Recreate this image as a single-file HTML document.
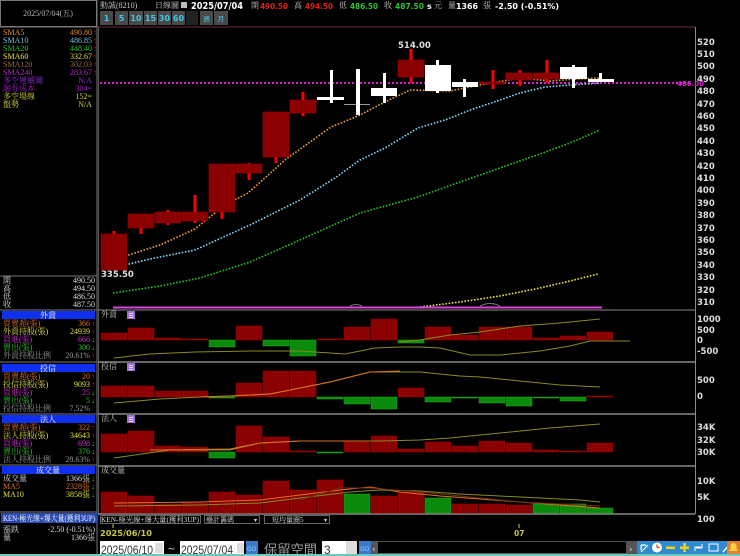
<!DOCTYPE html>
<html><head><meta charset="utf-8"><style>
html,body{margin:0;padding:0;background:#000;width:740px;height:556px;overflow:hidden}
svg{display:block}
.s{font-family:"Liberation Serif","Noto Serif CJK TC",serif;font-size:8px}
.b{font-family:"DejaVu Sans","Liberation Sans",sans-serif;font-weight:bold}
.ax{font-family:"DejaVu Sans","Liberation Sans",sans-serif;font-weight:bold;font-size:8.5px;fill:#ddd}
</style></head><body>
<svg width="740" height="556" viewBox="0 0 740 556" xmlns="http://www.w3.org/2000/svg">
<rect width="740" height="556" fill="#000"/>
<rect x="0.5" y="0.5" width="96" height="26" fill="none" stroke="#777"/>
<text x="48" y="16" class="s" fill="#bbb" text-anchor="middle">2025/07/04(五)</text>
<line x1="97" y1="0" x2="97" y2="556" stroke="#777"/>
<line x1="0" y1="27" x2="97" y2="27" stroke="#777"/>
<g class="s">
<text x="3" y="35" fill="#e08a30">SMA5</text><text x="92" y="35" fill="#e08a30" text-anchor="end">490.80</text>
<text x="3" y="43" fill="#7fbfe0">SMA10</text><text x="92" y="43" fill="#7fbfe0" text-anchor="end">486.85</text>
<text x="3" y="51" fill="#2eb82e">SMA20</text><text x="92" y="51" fill="#2eb82e" text-anchor="end">448.40</text>
<text x="3" y="59" fill="#e0e040">SMA60</text><text x="92" y="59" fill="#e0e040" text-anchor="end">332.67</text>
<text x="3" y="67" fill="#9a6a40">SMA120</text><text x="92" y="67" fill="#9a6a40" text-anchor="end">302.03</text>
<text x="3" y="75" fill="#b030c0">SMA240</text><text x="92" y="75" fill="#b030c0" text-anchor="end">283.67</text>
<text x="3" y="83" fill="#8a30d0">多空連續圖</text><text x="92" y="83" fill="#8a30d0" text-anchor="end">N/A</text>
<text x="3" y="91" fill="#a020c0">融券成本</text><text x="92" y="91" fill="#a020c0" text-anchor="end">304=</text>
<text x="3" y="99" fill="#d0d040">多空場線</text><text x="92" y="99" fill="#d0d040" text-anchor="end">152=</text>
<text x="3" y="107" fill="#d0d040">盤勢</text><text x="92" y="107" fill="#d0d040" text-anchor="end">N/A</text>
</g>
<g fill="#f00" class="s"><text x="93" y="35">↑</text><text x="93" y="43">↑</text><text x="93" y="51">↑</text><text x="93" y="59">↑</text><text x="93" y="67">↑</text><text x="93" y="75">↑</text></g>
<line x1="0" y1="276" x2="97" y2="276" stroke="#777"/>
<g class="s" fill="#ddd">
<text x="3" y="283">開</text><text x="95" y="283" text-anchor="end">490.50</text>
<text x="3" y="291">高</text><text x="95" y="291" text-anchor="end">494.50</text>
<text x="3" y="299">低</text><text x="95" y="299" text-anchor="end">486.50</text>
<text x="3" y="307">收</text><text x="95" y="307" text-anchor="end">487.50</text>
</g>
<line x1="0" y1="310" x2="97" y2="310" stroke="#777"/>
<rect x="2" y="311" width="93" height="8" fill="#1030f0"/>
<text x="48" y="318" class="s" fill="#fff" text-anchor="middle">外資</text>
<g class="s">
<text x="3" y="326" fill="#e07020">買賣超(張)</text><text x="90" y="326" fill="#e07020" text-anchor="end">366</text>
<text x="3" y="334" fill="#e0e040">外資持股(張)</text><text x="90" y="334" fill="#e0e040" text-anchor="end">24939</text>
<text x="3" y="342" fill="#d030d0">買進(張)</text><text x="90" y="342" fill="#d030d0" text-anchor="end">666</text>
<text x="3" y="350" fill="#30c030">賣出(張)</text><text x="90" y="350" fill="#30c030" text-anchor="end">300</text>
<text x="3" y="358" fill="#999">外資持股比例</text><text x="90" y="358" fill="#999" text-anchor="end">20.61%</text>
</g>
<line x1="0" y1="362" x2="97" y2="362" stroke="#777"/>
<rect x="2" y="364" width="93" height="8" fill="#1030f0"/>
<text x="48" y="371" class="s" fill="#fff" text-anchor="middle">投信</text>
<g class="s">
<text x="3" y="379" fill="#e07020">買賣超(張)</text><text x="90" y="379" fill="#e07020" text-anchor="end">20</text>
<text x="3" y="387" fill="#e0e040">投信持股(張)</text><text x="90" y="387" fill="#e0e040" text-anchor="end">9093</text>
<text x="3" y="395" fill="#d030d0">買進(張)</text><text x="90" y="395" fill="#d030d0" text-anchor="end">25</text>
<text x="3" y="403" fill="#30c030">賣出(張)</text><text x="90" y="403" fill="#30c030" text-anchor="end">5</text>
<text x="3" y="411" fill="#999">投信持股比例</text><text x="90" y="411" fill="#999" text-anchor="end">7.52%</text>
</g>
<line x1="0" y1="414" x2="97" y2="414" stroke="#777"/>
<rect x="2" y="415" width="93" height="8" fill="#1030f0"/>
<text x="48" y="422" class="s" fill="#fff" text-anchor="middle">法人</text>
<g class="s">
<text x="3" y="430" fill="#e07020">買賣超(張)</text><text x="90" y="430" fill="#e07020" text-anchor="end">322</text>
<text x="3" y="438" fill="#e0e040">法人持股(張)</text><text x="90" y="438" fill="#e0e040" text-anchor="end">34643</text>
<text x="3" y="446" fill="#d030d0">買進(張)</text><text x="90" y="446" fill="#d030d0" text-anchor="end">698</text>
<text x="3" y="454" fill="#30c030">賣出(張)</text><text x="90" y="454" fill="#30c030" text-anchor="end">376</text>
<text x="3" y="462" fill="#999">法人持股比例</text><text x="90" y="462" fill="#999" text-anchor="end">28.63%</text>
</g>
<line x1="0" y1="465" x2="97" y2="465" stroke="#777"/>
<rect x="2" y="466" width="93" height="8" fill="#1030f0"/>
<text x="48" y="473" class="s" fill="#fff" text-anchor="middle">成交量</text>
<g class="s">
<text x="3" y="481" fill="#ddd">成交量</text><text x="90" y="481" fill="#ddd" text-anchor="end">1366張</text>
<text x="3" y="489" fill="#e07020">MA5</text><text x="90" y="489" fill="#e07020" text-anchor="end">2328張</text>
<text x="3" y="497" fill="#e0e040">MA10</text><text x="90" y="497" fill="#e0e040" text-anchor="end">3858張</text>
</g>
<g fill="#f00" class="s"><text x="91" y="326">↑</text><text x="91" y="334">↑</text><text x="91" y="358">↑</text><text x="91" y="379">↑</text><text x="91" y="387">↑</text><text x="91" y="430">↑</text><text x="91" y="438">↑</text><text x="91" y="462">↑</text></g>
<g fill="#30c030" class="s"><text x="91" y="342">↓</text><text x="91" y="350">↓</text><text x="91" y="395">↓</text><text x="91" y="403">↓</text><text x="91" y="446">↓</text><text x="91" y="454">↓</text><text x="91" y="481">↓</text><text x="91" y="489">↓</text><text x="91" y="497">↓</text></g>
<line x1="0" y1="512" x2="97" y2="512" stroke="#777"/>
<rect x="1" y="513" width="96" height="10" fill="#2848b0"/>
<text x="3" y="521" class="s" fill="#fff" textLength="92" lengthAdjust="spacingAndGlyphs">KEN-極光線+爆大量(獲利3UP)</text>
<text x="3" y="532" class="s" fill="#ddd">漲跌</text><text x="95" y="532" class="s" fill="#ddd" text-anchor="end">-2.50 (-0.51%)</text>
<text x="3" y="540" class="s" fill="#ddd">量</text><text x="95" y="540" class="s" fill="#ddd" text-anchor="end">1366張</text>

<!-- header -->
<text x="100" y="8" class="s" fill="#ccc" font-size="7.5">動誠(8210)</text>
<text x="155" y="8" class="s" fill="#ccc" font-size="7.5">日線圖</text>
<rect x="181" y="2" width="6" height="6" fill="#bbb"/>
<g class="b" font-size="8">
<text x="191" y="9" fill="#fff" font-size="9.5" textLength="52" lengthAdjust="spacingAndGlyphs">2025/07/04</text>
<text x="251" y="8" class="s" fill="#ccc" font-size="7" font-weight="normal">開</text><text x="260" y="9" fill="#e02020" textLength="28" lengthAdjust="spacingAndGlyphs">490.50</text>
<text x="294" y="8" class="s" fill="#ccc" font-size="7" font-weight="normal">高</text><text x="305" y="9" fill="#e02020" textLength="28" lengthAdjust="spacingAndGlyphs">494.50</text>
<text x="339" y="8" class="s" fill="#ccc" font-size="7" font-weight="normal">低</text><text x="350" y="9" fill="#30c030" textLength="28" lengthAdjust="spacingAndGlyphs">486.50</text>
<text x="384" y="8" class="s" fill="#ccc" font-size="7" font-weight="normal">收</text><text x="395" y="9" fill="#30c030" textLength="29" lengthAdjust="spacingAndGlyphs">487.50</text>
<text x="427" y="9" fill="#fff">s</text><text x="434" y="8" class="s" fill="#ccc" font-size="7" font-weight="normal">元</text>
<text x="448" y="8" class="s" fill="#ccc" font-size="7" font-weight="normal">量</text><text x="456" y="9" fill="#fff" textLength="22" lengthAdjust="spacingAndGlyphs">1366</text><text x="483" y="8" class="s" fill="#ccc" font-size="7" font-weight="normal">張</text>
<text x="495" y="9" fill="#fff" textLength="64" lengthAdjust="spacingAndGlyphs">-2.50 (-0.51%)</text>
</g>
<g font-family="DejaVu Sans,sans-serif" font-weight="bold" font-size="8" fill="#40c8e8" text-anchor="middle">
<rect x="100" y="11" width="13" height="14" fill="#4a4a4a"/><text x="106.5" y="21">1</text>
<rect x="115" y="11" width="13" height="14" fill="#4a4a4a"/><text x="121.5" y="21">5</text>
<rect x="129" y="11" width="14" height="14" fill="#4a4a4a"/><text x="136" y="21">10</text>
<rect x="144" y="11" width="13" height="14" fill="#4a4a4a"/><text x="150.5" y="21">15</text>
<rect x="158" y="11" width="13" height="14" fill="#4a4a4a"/><text x="164.5" y="21">30</text>
<rect x="172" y="11" width="13" height="14" fill="#4a4a4a"/><text x="178.5" y="21">60</text>
<rect x="186" y="11" width="12" height="14" fill="#222"/>
<rect x="200" y="11" width="13" height="14" fill="#4a4a4a"/><text x="206.5" y="21" font-size="6.5" font-weight="normal">週</text>
<rect x="214" y="11" width="14" height="14" fill="#4a4a4a"/><text x="221" y="21" font-size="6.5" font-weight="normal">月</text>
</g>

<!-- chart frame -->
<line x1="98" y1="27" x2="695" y2="27" stroke="#6a2a40"/>
<line x1="98.5" y1="27" x2="98.5" y2="514" stroke="#555"/>
<line x1="695.5" y1="27" x2="695.5" y2="514" stroke="#888"/>
<line x1="98" y1="310" x2="695" y2="310" stroke="#888"/>
<line x1="98" y1="362" x2="695" y2="362" stroke="#888" stroke-width="1.5"/>
<line x1="98" y1="414" x2="695" y2="414" stroke="#888" stroke-width="1.5"/>
<line x1="98" y1="466" x2="695" y2="466" stroke="#888" stroke-width="1.5"/>
<line x1="98" y1="514" x2="695" y2="514" stroke="#888" stroke-width="1.5"/>

<g class="ax">
<text x="697" y="45">520</text><text x="697" y="57">510</text><text x="697" y="69">500</text><text x="697" y="82">490</text><text x="697" y="94">480</text><text x="697" y="107">470</text><text x="697" y="119">460</text><text x="697" y="131">450</text><text x="697" y="144">440</text><text x="697" y="156">430</text><text x="697" y="169">420</text><text x="697" y="181">410</text><text x="697" y="193">400</text><text x="697" y="206">390</text><text x="697" y="218">380</text><text x="697" y="231">370</text><text x="697" y="243">360</text><text x="697" y="255">350</text><text x="697" y="268">340</text><text x="697" y="280">330</text><text x="697" y="293">320</text><text x="697" y="305">310</text>
<text x="697" y="322">1000</text><text x="697" y="333">500</text><text x="697" y="343">0</text><text x="697" y="354">-500</text>
<text x="697" y="383">500</text><text x="697" y="399">0</text>
<text x="697" y="430">34K</text><text x="697" y="443">32K</text><text x="697" y="455">30K</text>
<text x="697" y="484">10K</text><text x="697" y="500">5K</text><text x="697" y="522">100</text>
</g>

<line x1="100" y1="83" x2="690" y2="83" stroke="#e020d0" stroke-width="2" stroke-dasharray="2 2"/>
<text x="677" y="86" font-family="DejaVu Sans,sans-serif" font-size="7" fill="#e020d0" font-weight="bold">486.00</text>
<g fill="none" stroke-width="1.6" stroke-dasharray="1.6 1.6">
<polyline stroke="#f0a040" points="113,260 160,245 195,229 225,205 248,193 285,160 310,142 331,127 358,116 385,102 410,90 450,91 480,85 520,78 550,81 577,79 600,78"/>
<polyline stroke="#90d0f0" points="113,268 150,259 195,250 250,225 300,200 335,178 360,160 385,148 418,128 445,120 470,110 500,100 520,93 545,87 570,85 600,83"/>
<polyline stroke="#30c030" points="113,293 160,286 200,278 250,262 300,240 360,213 418,197 460,182 500,168 540,154 570,143 600,130"/>
<polyline stroke="#e8e840" points="420,307 460,302 500,296 540,288 570,281 598,274"/>
</g>
<line x1="113" y1="307.5" x2="602" y2="307.5" stroke="#e040e0" stroke-width="2"/>
<path d="M350,306 Q356,303 362,306" fill="none" stroke="#777"/>
<path d="M480,306 Q490,301 500,306" fill="none" stroke="#777"/>

<g fill="#f00">
<rect x="112.5" y="231" width="3" height="5"/>
<rect x="139.5" y="226" width="3" height="8"/>
<rect x="166.5" y="210" width="3" height="15"/>
<rect x="193.5" y="195" width="3" height="28"/>
<rect x="220.5" y="208" width="3" height="11"/>
<rect x="247.5" y="163" width="3" height="17"/>
<rect x="274.5" y="155" width="3" height="8"/>
<rect x="301.5" y="92" width="3" height="24"/>
<rect x="409.5" y="49" width="3" height="34"/>
<rect x="491.5" y="70" width="3" height="19"/>
<rect x="518.5" y="70" width="3" height="16"/>
<rect x="545.5" y="60" width="3" height="23"/>
</g>
<g fill="#8b0000" stroke="#a00000" stroke-width="0.6">
<rect x="101" y="234" width="26" height="36"/>
<rect x="128" y="214" width="26" height="14"/>
<rect x="155" y="212" width="26" height="11"/>
<rect x="182" y="212" width="26" height="9"/>
<rect x="209" y="164" width="26" height="48"/>
<rect x="236" y="164" width="26" height="9"/>
<rect x="263" y="112" width="26" height="45"/>
<rect x="290" y="100" width="26" height="13"/>
<rect x="398" y="60" width="26" height="17"/>
<rect x="479" y="82" width="26" height="2"/>
<rect x="506" y="73" width="26" height="7"/>
<rect x="533" y="73" width="26" height="6"/>
</g>
<g fill="#fff">
<rect x="317" y="97" width="27" height="3"/><rect x="330" y="70" width="3" height="33"/>
<rect x="344" y="104" width="26" height="1" fill="#999"/><rect x="356" y="69" width="4" height="46"/>
<rect x="371" y="88" width="26" height="8"/><rect x="383" y="73" width="3" height="30"/>
<rect x="425" y="65" width="26" height="26"/><rect x="436" y="60" width="3" height="33"/>
<rect x="452" y="82" width="26" height="5"/><rect x="463" y="79" width="3" height="18"/>
<rect x="560" y="67" width="27" height="12"/><rect x="572" y="65" width="3" height="23"/>
<rect x="588" y="79" width="26" height="3"/><rect x="599" y="73" width="3" height="9"/>
</g>
<text x="101" y="277" class="b" font-size="8.5" fill="#ddd">335.50</text>
<text x="398" y="48" class="b" font-size="8.5" fill="#ddd">514.00</text>

<g class="s" fill="#ccc" font-size="7.5"><text x="101" y="317">外資</text><text x="101" y="369">投信</text><text x="101" y="421">法人</text><text x="101" y="473">成交量</text></g>
<g fill="#a070e0"><rect x="127" y="311" width="8" height="8"/><rect x="127" y="363" width="8" height="8"/><rect x="127" y="415" width="8" height="8"/></g>
<g stroke="#fff" stroke-width="0.7"><path d="M129 313.5h4M129 315.5h4M129 317.5h4M129 365.5h4M129 367.5h4M129 369.5h4M129 417.5h4M129 419.5h4M129 421.5h4"/></g>

<g fill="#8b0000" stroke="#a00000" stroke-width="0.5">
<rect x="101" y="333" width="26" height="7"/><rect x="128" y="328" width="26" height="12"/><rect x="155" y="338" width="26" height="2"/><rect x="182" y="339" width="26" height="1"/>
<rect x="236" y="326" width="26" height="14"/><rect x="317" y="339" width="26" height="1"/><rect x="344" y="327" width="26" height="13"/><rect x="371" y="319" width="26" height="21"/>
<rect x="425" y="327" width="26" height="13"/><rect x="452" y="335" width="26" height="5"/><rect x="479" y="327" width="26" height="13"/><rect x="506" y="327" width="26" height="13"/><rect x="533" y="338" width="26" height="2"/><rect x="560" y="336" width="26" height="4"/><rect x="587" y="332" width="26" height="8"/>
</g>
<g fill="#0a8a0a" stroke="#20b020" stroke-width="0.5">
<rect x="209" y="340" width="26" height="7"/><rect x="263" y="340" width="26" height="6"/><rect x="290" y="340" width="26" height="16"/><rect x="398" y="340" width="26" height="3"/>
</g>
<polyline fill="none" stroke="#8a8a20" stroke-width="1" points="114,358 150,354 195,352 250,351 300,351 345,354 375,348 400,347 420,347 440,348 470,355 500,355 540,351 570,346 590,341 630,341"/>
<polyline fill="none" stroke="#8a8a20" stroke-width="1" points="400,342 420,340 450,335 480,332 520,326 560,323 600,319"/>
<g fill="#8b0000" stroke="#a00000" stroke-width="0.5">
<rect x="101" y="386" width="26" height="11"/><rect x="128" y="386" width="26" height="11"/><rect x="155" y="391" width="26" height="6"/><rect x="182" y="391" width="26" height="6"/>
<rect x="236" y="383" width="26" height="14"/><rect x="263" y="371" width="26" height="26"/><rect x="290" y="371" width="26" height="26"/><rect x="398" y="388" width="26" height="9"/><rect x="587" y="396" width="26" height="1"/>
</g>
<g fill="#0a8a0a" stroke="#20b020" stroke-width="0.5">
<rect x="209" y="397" width="26" height="1"/><rect x="317" y="397" width="26" height="2"/><rect x="344" y="397" width="26" height="7"/><rect x="371" y="397" width="26" height="12"/>
<rect x="425" y="397" width="26" height="5"/><rect x="452" y="397" width="26" height="1"/><rect x="479" y="397" width="26" height="6"/><rect x="506" y="397" width="26" height="9"/><rect x="533" y="397" width="26" height="1"/><rect x="560" y="397" width="26" height="4"/>
</g>
<polyline fill="none" stroke="#8a8a20" stroke-width="1" points="114,403 160,399 200,397 230,396 270,394 300,388 330,382 370,372 420,372 460,376 480,377 520,381 560,385 600,387"/>
<polyline fill="none" stroke="#e07020" stroke-width="1" points="200,397 230,396 270,394 300,388 330,382 370,372 400,371"/>
<g fill="#8b0000" stroke="#a00000" stroke-width="0.5">
<rect x="101" y="434" width="26" height="18"/><rect x="128" y="431" width="26" height="21"/><rect x="155" y="446" width="26" height="6"/><rect x="182" y="447" width="26" height="5"/>
<rect x="236" y="426" width="26" height="26"/><rect x="263" y="437" width="26" height="15"/><rect x="290" y="451" width="26" height="1"/><rect x="344" y="442" width="26" height="10"/><rect x="371" y="436" width="26" height="16"/><rect x="398" y="449" width="26" height="3"/>
<rect x="425" y="442" width="26" height="10"/><rect x="452" y="446" width="26" height="6"/><rect x="479" y="441" width="26" height="11"/><rect x="506" y="443" width="26" height="9"/><rect x="533" y="450" width="26" height="2"/><rect x="560" y="451" width="26" height="1"/><rect x="587" y="443" width="26" height="9"/>
</g>
<g fill="#0a8a0a" stroke="#20b020" stroke-width="0.5"><rect x="209" y="452" width="26" height="6"/><rect x="317" y="452" width="26" height="1"/></g>
<polyline fill="none" stroke="#8a8a20" stroke-width="1" points="114,458 170,450 230,450 260,443 300,441 380,441 420,440 450,438 500,433 550,428 600,424"/>
<polyline fill="none" stroke="#e07020" stroke-width="1" points="150,450 230,449 260,443 300,441 370,441"/>
<g fill="#8b0000" stroke="#a00000" stroke-width="0.5">
<rect x="101" y="492" width="26" height="21"/><rect x="128" y="496" width="26" height="17"/><rect x="155" y="504" width="26" height="9"/><rect x="182" y="503" width="26" height="10"/>
<rect x="209" y="492" width="26" height="21"/><rect x="236" y="495" width="26" height="18"/><rect x="263" y="481" width="26" height="32"/><rect x="290" y="490" width="26" height="23"/><rect x="317" y="480" width="26" height="33"/>
<rect x="371" y="496" width="26" height="17"/><rect x="398" y="492" width="26" height="21"/><rect x="452" y="504" width="26" height="9"/><rect x="479" y="504" width="26" height="9"/><rect x="506" y="505" width="26" height="8"/>
</g>
<g fill="#0a8a0a" stroke="#20b020" stroke-width="0.5"><rect x="344" y="494" width="26" height="19"/><rect x="425" y="498" width="26" height="15"/><rect x="533" y="504" width="26" height="9"/><rect x="560" y="504" width="26" height="9"/><rect x="587" y="508" width="26" height="5"/></g>
<polyline fill="none" stroke="#e07020" stroke-width="1" points="114,503 200,502 260,500 300,495 340,490 370,487 400,492 440,496 480,499 520,502 560,505 600,508"/>
<polyline fill="none" stroke="#8a8a20" stroke-width="1" points="114,506 200,505 260,503 300,498 350,492 380,490 420,491 460,494 500,496 540,498 580,500 600,502"/>
<polyline fill="none" stroke="#6a3010" stroke-width="1" points="300,500 340,488 370,488 420,492 470,497 520,502 600,506"/>

<g class="s" fill="#ddd">
<rect x="100.5" y="515.5" width="100" height="8" fill="#000" stroke="#666"/><text x="101" y="522" font-size="7" textLength="98" lengthAdjust="spacingAndGlyphs">KEN-極光線+爆大量(獲利3UP)</text>
<rect x="204.5" y="515.5" width="55" height="8" fill="#000" stroke="#666"/><text x="206" y="522" font-size="7">壘計籌碼</text><text x="254" y="522" font-size="6">▾</text>
<rect x="264.5" y="515.5" width="65" height="8" fill="#000" stroke="#666"/><text x="272" y="522" font-size="7">短均量圈5</text><text x="324" y="522" font-size="6">▾</text>
</g>
<line x1="113" y1="524" x2="113" y2="528" stroke="#cc4"/>
<text x="100" y="536" class="b" font-size="8" fill="#c8c840" textLength="52" lengthAdjust="spacingAndGlyphs">2025/06/10</text>
<line x1="519" y1="524" x2="519" y2="528" stroke="#cc4"/>
<text x="514" y="536" class="b" font-size="7.5" fill="#c8c840">07</text>

<g font-family="Liberation Sans,sans-serif" font-size="12" fill="#333">
<rect x="100" y="541" width="64" height="14" fill="#fff"/><text x="101" y="554" textLength="52" lengthAdjust="spacingAndGlyphs">2025/06/10</text>
<rect x="155" y="543" width="8" height="10" fill="#ddd"/>
<text x="168" y="553" fill="#ccc">~</text>
<rect x="180" y="541" width="64" height="14" fill="#fff"/><text x="181" y="554" textLength="52" lengthAdjust="spacingAndGlyphs">2025/07/04</text>
<rect x="237" y="543" width="7" height="10" fill="#ddd"/>
<rect x="246" y="541" width="12" height="14" fill="#3a7ac8"/><text x="247" y="551" font-size="6" fill="#9cf">GO</text>
<text x="264" y="554" font-family="Noto Sans CJK TC,sans-serif" font-size="13" fill="#999" textLength="53" lengthAdjust="spacingAndGlyphs">保留空間</text>
<rect x="322" y="541" width="26" height="14" fill="#fff"/><text x="324" y="554">3</text>
<rect x="346" y="541" width="11" height="14" fill="#ddd"/>
<rect x="359" y="541" width="12" height="14" fill="#3a7ac8"/><text x="360" y="551" font-size="6" fill="#9cf">GO</text>
</g>
<rect x="371" y="541" width="266" height="13" fill="#555"/>
<rect x="378" y="542" width="248" height="11" fill="#000"/>
<text x="372" y="552" font-size="9" fill="#ddd" font-family="DejaVu Sans">‹</text>
<text x="629" y="552" font-size="9" fill="#ddd" font-family="DejaVu Sans">›</text>
<g>
<rect x="637" y="541" width="103" height="13" fill="#2f8ad0"/>
<path d="M641 552l7-7M641 545h5M641 545v5" stroke="#fff" stroke-width="1.2" fill="none"/>
<circle cx="657" cy="547.5" r="5" fill="#fff"/><path d="M657 547.5v-3M657 547.5h2.5" stroke="#e04020" stroke-width="1.2"/>
<rect x="666" y="546.5" width="9" height="2.5" fill="#f0d020"/>
<rect x="680" y="546.5" width="9" height="2.5" fill="#f0d020"/><rect x="683.3" y="543" width="2.5" height="9" fill="#f0d020"/>
<path d="M695 551v-4h6M702 544v4h-6" stroke="#fff" fill="none"/>
<rect x="709" y="544" width="9" height="7" fill="none" stroke="#fff"/>
<path d="M723 552l7-8" stroke="#fff" stroke-width="1.5"/>
<rect x="727" y="541" width="13" height="13" fill="#e08030"/>
<path d="M729 551h9l-1.5-2v-3a3 3 0 0 0-6 0v3z" fill="#ffd040"/>
</g>
<rect x="0" y="554" width="740" height="2" fill="#6ac8c0"/>
</svg>
</body></html>
